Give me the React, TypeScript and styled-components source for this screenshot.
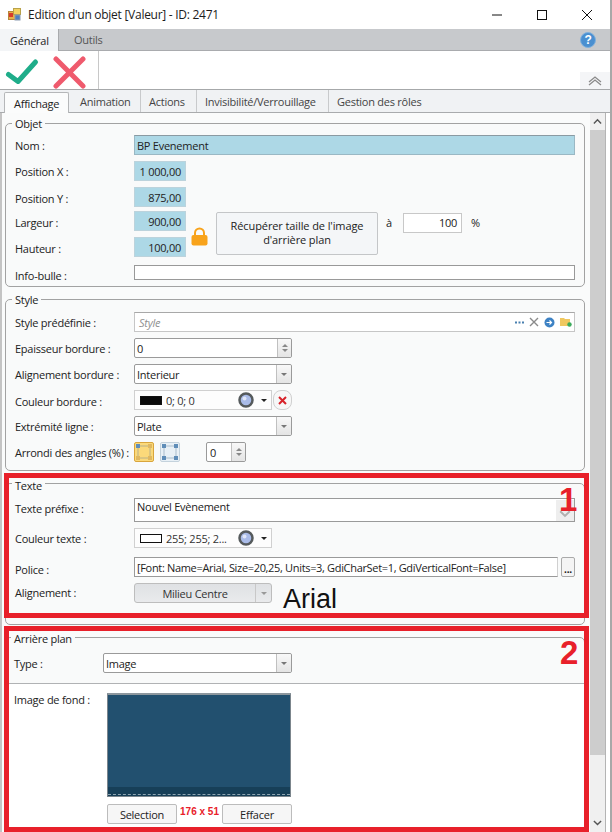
import React from "react";
import styled, { createGlobalStyle } from "styled-components";

const Global = createGlobalStyle`
  html, body { margin: 0; padding: 0; background: #fff; }
  * { box-sizing: border-box; }
  body { font-family: "Open Sans", "Noto Sans", sans-serif; font-size: 11px; letter-spacing: -0.25px; color: #222; }
`;

const Win = styled.div`
  position: relative; width: 612px; height: 832px; overflow: hidden; background: #fff;
  display: flex; flex-direction: column; border-right: 2px solid #a8a8a8;
`;
const TitleBar = styled.div`
  height: 29px; display: flex; align-items: center; padding-left: 8px; gap: 7px; flex: none; width: 610px;
`;
const TitleText = styled.span`font-size: 12px; letter-spacing: -0.27px; color: #1b1b1b;`;
const WinControls = styled.div`margin-left: auto; display: flex; margin-right: 18px; gap: 35px; align-items: center;`;
const RibbonTabs = styled.div`
  height: 22px; flex: none; background: #c7c9cc; border-bottom: 1px solid #a9abae; display: flex; align-items: stretch; position: relative;
`;
const RibbonTab = styled.div<{ $on?: boolean }>`
  width: ${p => (p.$on ? 59 : 50)}px; padding-left: ${p => (p.$on ? 10 : 15)}px; display: flex; align-items: center;
  color: ${p => (p.$on ? "#222" : "#555")}; background: ${p => (p.$on ? "#f3f5f7" : "transparent")};
  ${p => (p.$on ? "border-right: 1px solid #a9abae; margin-bottom: -1px;" : "")}
`;
const HelpWrap = styled.div`margin-left: auto; margin-right: 14px; display: flex; align-items: center;`;
const Toolbar = styled.div`
  height: 39px; flex: none; display: flex; background: #fff; border-bottom: 1px solid #a6a8aa; position: relative;
`;
const ActionGroup = styled.div`width: 99px; border-right: 1px solid #c8c8c8; display: block;`;
const Collapse = styled.div`
  margin-left: auto; margin-top: 21px; width: 30px; margin-right: 0; height: 17px; background: #f4f5f7;
  display: flex; align-items: center; justify-content: center;
`;
const Tabs = styled.div`
  height: 23px; flex: none; display: flex; align-items: flex-end; padding-left: 4px; background: #f0f2f4;
  border-bottom: 1px solid #a9abad;
`;
const Tab = styled.div<{ $on?: boolean; $w: number; $pl?: number; $last?: boolean }>`
  width: ${p => p.$w}px; height: ${p => (p.$on ? 21 : 22)}px; display: flex; align-items: center;
  color: ${p => (p.$on ? "#222" : "#444")}; white-space: nowrap;
  ${p => p.$on
    ? "padding-left: 9px; background: #fbfcfc; border: 1px solid #b5b7b9; border-bottom: none; border-radius: 2px 2px 0 0; margin-bottom: -1px;"
    : `padding-left: ${p.$pl ?? 8}px; border-right: ${p.$last ? "none" : "1px solid #c8cacc"};`}
`;
const Body = styled.div`flex: 1; display: flex; min-height: 0; border-left: 2px solid #c4c4c4;`;
const Panel = styled.div`
  width: 588px; padding: 3px 3px 0 3px; background: #fafbfb; display: flex; flex-direction: column; gap: 5px; flex: none; overflow: hidden;
`;
const Group = styled.fieldset<{ $pb: number }>`
  margin: 0; min-width: 0; width: 580px; flex: none; padding: 0 9px ${p => p.$pb}px 9px;
  border: 1px solid #a2a2a2; border-radius: 5px; background: #f9fafa;
`;
const Legend = styled.legend<{ $nudge?: number; $dy?: number }>`
  padding: 0 3px; margin-left: ${p => -3 - (p.$nudge ?? 0)}px; font-size: 11px; line-height: 14px; height: 14px; color: #222;
  position: relative; top: ${p => p.$dy ?? 1}px;
`;
const Row = styled.div<{ $top: number; $h?: number }>`
  display: flex; align-items: center; margin-top: ${p => p.$top}px; height: ${p => p.$h ?? 20}px;
`;
const Label = styled.div<{ $w?: number; $drop?: number; $lift?: number; $nudge?: number }>`
  width: ${p => (p.$w ?? 119) + (p.$nudge ?? 0)}px; flex: none; color: #222; white-space: nowrap;
  padding-top: ${p => p.$drop ?? 0}px; padding-bottom: ${p => p.$lift ?? 0}px; margin-left: ${p => -(p.$nudge ?? 0)}px;
`;
const BlueInput = styled.div<{ $w?: number }>`
  width: ${p => (p.$w ? `${p.$w}px` : "441px")}; height: 20px; background: #add8e6; border: 1px solid #9ab8c4;
  border-top-color: #8b9aa2; display: flex; align-items: center; padding: 0 2px;
  color: #222; white-space: nowrap;
`;
const NumInput = styled(BlueInput)`justify-content: flex-end; padding-right: 4px; border: 1px solid #bcd3dc;`;
const PlainBox = styled.div<{ $w: number; $h?: number }>`
  width: ${p => p.$w}px; height: ${p => p.$h ?? 20}px; background: #fff; border: 1px solid #9a9a9a;
  display: flex; align-items: center; padding-left: 2px; color: #222; flex: none; position: relative; white-space: nowrap;
`;
const ArrowBox = styled.div<{ $w?: number }>`
  margin-left: auto; width: ${p => p.$w ?? 14}px; height: 100%; background: linear-gradient(#f8f8f8, #e4e4e4);
  border-left: 1px solid #c0c0c0; display: flex; flex-direction: column; align-items: center; justify-content: center; gap: 2px;
  border-radius: 0 2px 2px 0;
`;
const Tri = styled.span<{ $up?: boolean; $c?: string; $s?: number }>`
  width: 0; height: 0; border-left: ${p => p.$s ?? 3}px solid transparent; border-right: ${p => p.$s ?? 3}px solid transparent;
  ${p => (p.$up ? "border-bottom" : "border-top")}: ${p => p.$s ?? 3}px solid ${p => p.$c ?? "#777"};
`;
const Combo = styled(PlainBox)`border-radius: 2px;`;
const SizeBlock = styled.div`display: flex; margin-top: 4px; align-items: center;`;
const SizeRows = styled.div`width: 172px; display: flex; flex-direction: column; flex: none;`;
const LockWrap = styled.div`width: 29px; flex: none; display: flex; padding-left: 4px; padding-top: 4px;`;
const BigBtn = styled.button`
  width: 162px; height: 43px; padding: 0 8px; font: inherit; letter-spacing: -0.1px; color: #222; line-height: 14px; background: #f4f6f8;
  border: 1px solid #c4c6c8; border-radius: 2px; flex: none; margin-top: -2px;
`;
const AWord = styled.span`margin-left: 8px; width: 17px; margin-top: -24px;`;
const Pct = styled.div`
  width: 59px; height: 20px; background: #fff; border: 1px solid #c8c8c8; text-align: right; padding-right: 4px; line-height: 18px;
  margin-top: -23px; flex: none;
`;
const PctSign = styled.span`margin-left: 9px; margin-top: -24px;`;
const InfoInput = styled.div`width: 441px; height: 15px; background: #fff; border: 1px solid #999;`;
const StyleBox = styled.div`
  width: 441px; height: 20px; background: #fff; border: 1px solid #c6c6c6; border-top-color: #a8a8a8; display: flex; align-items: center;
  padding-left: 4px; padding-right: 2px; color: #909090; font-style: italic;
`;
const StyleIcons = styled.div`margin-left: auto; display: flex; align-items: center; gap: 5px; font-style: normal;`;
const ColorBox = styled.div<{ $w: number }>`
  width: ${p => p.$w}px; height: 20px; background: #fdfdfd; border: 1px solid #d0d0d0; display: flex; align-items: center; padding-left: 5px; color: #333; flex: none;
`;
const Swatch = styled.span<{ $c: string }>`
  width: 22px; height: 9px; background: ${p => p.$c}; border: 1px solid #111; flex: none; margin-right: 4px;
`;
const WheelWrap = styled.div`margin-left: auto; display: flex; align-items: center; gap: 7px; margin-right: 4px;`;
const DelBtn = styled.div`
  width: 19px; height: 20px; margin-left: 1px; background: #f7f7f7; border: 1px solid #d0d0d0; border-radius: 8px;
  display: flex; align-items: center; justify-content: center;
`;
const CornerBtn = styled.div<{ $on?: boolean }>`
  width: 20px; height: 20px; border-radius: 2px; flex: none; margin-right: 6px; display: flex;
  background: ${p => (p.$on ? "#fbd97a" : "#e8f0f6")}; border: 1px solid ${p => (p.$on ? "#d9a53c" : "#c4d2dc")};
`;
const SpinSmall = styled(PlainBox)`margin-left: 20px; border-radius: 2px; padding-left: 3px;`;
const PrefixBox = styled.div`
  width: 441px; height: 24px; background: #fff; border: 1px solid #9a9a9a; display: flex; padding-left: 2px; color: #222; line-height: 14px; padding-top: 1px;
`;
const PrefixArrow = styled.div`
  margin-left: auto; width: 18px; height: 100%; background: #eeeeee; display: flex; justify-content: center; align-items: flex-end; padding-bottom: 3px;
`;
const FontBox = styled.div`
  width: 424px; height: 20px; background: #fff; border: 1px solid #9a9a9a; border-right-color: #d0d0d0; display: flex; align-items: center; padding-left: 2px; white-space: nowrap; flex: none; letter-spacing: -0.33px;
`;
const DotsBtn = styled.div`
  width: 14px; height: 20px; margin-left: 3px; background: #f4f4f4; border: 1px solid #aaa; border-radius: 2px; color: #111;
  display: flex; align-items: flex-end; justify-content: center; font-weight: 700; font-size: 10px; line-height: 14px;
`;
const AlignBtn = styled.div`
  width: 138px; height: 20px; border: 1px solid #bdbdbd; border-radius: 3px; display: flex; background: linear-gradient(#dfe1e4, #e9eaec);
`;
const AlignText = styled.div`flex: 1; display: flex; align-items: center; justify-content: center; color: #333;`;
const AlignArrow = styled.div`width: 16px; border-left: 1px solid #c8c8c8; display: flex; align-items: center; justify-content: center;`;
const Divider = styled.div`height: 1px; background: #b0b2b4; margin: 10px -9px 0;`;
const White = styled.div`
  margin: 0 -9px; padding: 9px 9px 0 9px; background: #fff; display: flex; height: 160px;
`;
const ImageLabel = styled.div`width: 93px; margin-left: -1px; flex: none; line-height: 14px; margin-top: 0;`;
const ImageCol = styled.div`display: flex; flex-direction: column; width: 185px;`;
const Picture = styled.div`
  position: relative; width: 184px; height: 104px; border: 1px solid #7b858c; border-top: 2px solid #8d979e;
  background: linear-gradient(#22506f 0 91%, #173f58 91%);
  &::after {
    content: ""; position: absolute; left: 0; right: 0; bottom: 1px; border-bottom: 1px dashed #8fa5b1;
  }
`;
const PicButtons = styled.div`display: flex; align-items: center; margin-top: 7px;`;
const PicBtn = styled.button`
  width: 70px; height: 20px; padding: 0; font: inherit; letter-spacing: inherit; color: #222; background: #f6f6f6; border: 1px solid #bcbcbc; border-radius: 2px; flex: none;
`;
const Dim = styled.span`
  width: 45px; flex: none; text-align: center; color: #e8202a; font-weight: 700; font-family: "Liberation Sans", sans-serif; font-size: 10px; letter-spacing: 0; margin-top: -5px; white-space: nowrap;
`;
const Scroll = styled.div`
  width: 15px; margin-left: 0; background: #f0f0f0; display: flex; flex-direction: column; align-items: center; flex: none;
`;
const ScrollBtn = styled.div`height: 17px; flex: none; display: flex; align-items: center; justify-content: center; width: 100%;`;
const Thumb = styled.div`height: 625px; width: 100%; background: #cdcdcd; flex: none;`;
const ScrollGap = styled.div`flex: 1;`;
const RightGap = styled.div`flex: 1; border-left: 1px solid #b4b4b4; background: #fff;`;
const RedBox = styled.div<{ $y: number; $h: number }>`
  position: absolute; left: 4px; top: ${p => p.$y}px; width: 585px; height: ${p => p.$h}px; border: 5px solid #e8202a; pointer-events: none;
`;
const RedNum = styled.div<{ $y: number; $x: number }>`
  position: absolute; left: ${p => p.$x}px; top: ${p => p.$y}px; color: #e8202a; font-family: "Liberation Sans", sans-serif; font-weight: 700; font-size: 33px; line-height: 33px; letter-spacing: 0;
`;
const ArialNote = styled.div`
  position: absolute; left: 283px; top: 583px; color: #111; font-family: "Liberation Sans", sans-serif; font-size: 27px; line-height: 32px; letter-spacing: 0;
`;

const AppIcon = () => (
  <svg width="13" height="13" viewBox="0 0 13 13">
    <rect x="0.5" y="3.5" width="7" height="8" fill="#e8b04a" stroke="#b8843a" />
    <rect x="1" y="5" width="4" height="4" fill="#d83a2a" />
    <rect x="5.5" y="0.5" width="7" height="6" fill="#f3d060" stroke="#b8a24a" />
    <rect x="7" y="7" width="5" height="5" fill="#4f7fc0" stroke="#8a9ab0" />
  </svg>
);
const Minimize = () => <svg width="10" height="10" viewBox="0 0 10 10"><path d="M0 5h10" stroke="#111" strokeWidth="1" /></svg>;
const Maximize = () => <svg width="10" height="10" viewBox="0 0 10 10"><rect x=".5" y=".5" width="9" height="9" fill="none" stroke="#111" /></svg>;
const Close = () => <svg width="10" height="10" viewBox="0 0 10 10"><path d="M0 0l10 10M10 0L0 10" stroke="#111" strokeWidth="1" /></svg>;
const Help = () => (
  <svg width="16" height="16" viewBox="0 0 16 16">
    <circle cx="8" cy="8" r="7.5" fill="#4a8fd0" stroke="#7fb0dc" />
    <text x="8" y="12.3" textAnchor="middle" fontSize="12" fontWeight="700" fontFamily="Liberation Sans" fill="#fff">?</text>
  </svg>
);
const Actions = () => (
  <svg width="98" height="38" viewBox="0 0 98 38">
    <path d="M8.5 23.5l9.5 7L35.5 11" fill="none" stroke="#1fad8a" strokeWidth="5" strokeLinecap="round" strokeLinejoin="round" />
    <path d="M56 8l27 27M83 8L56 35" fill="none" stroke="#ef5a6d" strokeWidth="5" strokeLinecap="round" />
  </svg>
);
const Chev = ({ up = false, c = "#666", w = 12 }: { up?: boolean; c?: string; w?: number }) => (
  <svg width={w} height={w * 0.7} viewBox="0 0 10 7">
    <path d={up ? "M1 6l4-4 4 4" : "M1 1l4 4 4-4"} fill="none" stroke={c} strokeWidth="1.6" />
  </svg>
);
const DoubleUp = () => (
  <svg width="14" height="10" viewBox="0 0 14 10">
    <path d="M1 6l6-5 6 5M1 9l6-5 6 5" fill="none" stroke="#8a8a8a" strokeWidth="1.3" />
  </svg>
);
const Lock = () => (
  <svg width="17" height="19" viewBox="0 0 17 19">
    <path d="M4 9V6a4.5 4.5 0 0 1 9 0v3" fill="none" stroke="#f8a31b" strokeWidth="2" />
    <rect x="0.5" y="8" width="16" height="10.5" rx="2" fill="#f8a31b" />
  </svg>
);
const StyleActions = () => (
  <StyleIcons>
    <svg width="9" height="3" viewBox="0 0 9 3"><path d="M0 1.5h2M3.5 1.5h2M7 1.5h2" stroke="#4a80b0" strokeWidth="2" /></svg>
    <svg width="10" height="10" viewBox="0 0 10 10"><path d="M1 1l8 8M9 1l-8 8" stroke="#8a8a8a" strokeWidth="1.4" /></svg>
    <svg width="11" height="11" viewBox="0 0 11 11"><circle cx="5.5" cy="5.5" r="5" fill="#3d82c4" /><path d="M2.5 5.5h5M5.5 3.5l2 2-2 2" fill="none" stroke="#fff" strokeWidth="1.2" /></svg>
    <svg width="12" height="10" viewBox="0 0 12 10"><path d="M0 1h4l1 1h5v7H0z" fill="#f0c860" /><circle cx="9.5" cy="7.5" r="2.2" fill="#3cab5c" /></svg>
  </StyleIcons>
);
const Wheel = () => (
  <svg width="16" height="16" viewBox="0 0 16 16">
    <circle cx="8" cy="8" r="6.5" fill="#a9bbe8" stroke="#555a5c" strokeWidth="2.5" />
    <circle cx="6.5" cy="6.5" r="2" fill="#dfe6f8" />
  </svg>
);
const RedX = () => (
  <svg width="9" height="9" viewBox="0 0 9 9"><path d="M1 1l7 7M8 1L1 8" stroke="#d8232a" strokeWidth="2" /></svg>
);
const CornerIcon = ({ on }: { on?: boolean }) => (
  <svg width="18" height="18" viewBox="0 0 18 18">
    <rect x="3" y="3" width="12" height="12" fill="none" stroke={on ? "#b8b088" : "#a9bccb"} strokeWidth="1" />
    {[[1, 1], [13, 1], [1, 13], [13, 13]].map(([x, y]) => (
      <rect key={`${x}-${y}`} x={x} y={y} width="4" height="4" fill={on && x + y > 2 ? "#e0b860" : "#5f8db8"} />
    ))}
  </svg>
);

const Select = ({ w, value }: { w: number; value: string }) => (
  <Combo $w={w}>{value}<ArrowBox $w={15}><Tri $c="#777" /></ArrowBox></Combo>
);
const Spin = ({ value }: { value: string }) => (
  <Combo $w={158}>{value}<ArrowBox $w={14}><Tri $up $c="#888" /><Tri $c="#888" /></ArrowBox></Combo>
);

export default function App() {
  return (
    <>
      <Global />
      <Win>
        <TitleBar>
          <AppIcon />
          <TitleText>Edition d'un objet [Valeur] - ID: 2471</TitleText>
          <WinControls><Minimize /><Maximize /><Close /></WinControls>
        </TitleBar>
        <RibbonTabs>
          <RibbonTab $on>Général</RibbonTab>
          <RibbonTab>Outils</RibbonTab>
          <HelpWrap><Help /></HelpWrap>
        </RibbonTabs>
        <Toolbar>
          <ActionGroup><Actions /></ActionGroup>
          <Collapse><DoubleUp /></Collapse>
        </Toolbar>
        <Tabs>
          <Tab $on $w={65}>Affichage</Tab>
          <Tab $w={72} $pl={11}>Animation</Tab>
          <Tab $w={56}>Actions</Tab>
          <Tab $w={132}>Invisibilité/Verrouillage</Tab>
          <Tab $w={110} $last>Gestion des rôles</Tab>
        </Tabs>
        <Body>
          <Panel>
            <Group $pb={6}>
              <Legend>Objet</Legend>
              <Row $top={5}><Label $drop={1}>Nom :</Label><BlueInput>BP Evenement</BlueInput></Row>
              <Row $top={6}><Label>Position X :</Label><NumInput $w={52}>1 000,00</NumInput></Row>
              <Row $top={6}><Label $drop={2}>Position Y :</Label><NumInput $w={52}>875,00</NumInput></Row>
              <SizeBlock>
                <SizeRows>
                  <Row $top={0}><Label $drop={2}>Largeur :</Label><NumInput $w={52}>900,00</NumInput></Row>
                  <Row $top={6}><Label $drop={2}>Hauteur :</Label><NumInput $w={52}>100,00</NumInput></Row>
                </SizeRows>
                <LockWrap><Lock /></LockWrap>
                <BigBtn>Récupérer taille de l'image d'arrière plan</BigBtn>
                <AWord>à</AWord>
                <Pct>100</Pct>
                <PctSign>%</PctSign>
              </SizeBlock>
              <Row $top={8} $h={15}><Label $drop={6}>Info-bulle :</Label><InfoInput /></Row>
            </Group>

            <Group $pb={8}>
              <Legend>Style</Legend>
              <Row $top={6}><Label>Style prédéfinie :</Label><StyleBox>Style<StyleActions /></StyleBox></Row>
              <Row $top={6}><Label>Epaisseur bordure :</Label><Spin value="0" /></Row>
              <Row $top={6}><Label>Alignement bordure :</Label><Select w={158} value="Interieur" /></Row>
              <Row $top={6}>
                <Label $drop={3}>Couleur bordure :</Label>
                <ColorBox $w={138}><Swatch $c="#0a0a0a" />0; 0; 0<WheelWrap><Wheel /><Tri $c="#222" /></WheelWrap></ColorBox>
                <DelBtn><RedX /></DelBtn>
              </Row>
              <Row $top={6}><Label>Extrémité ligne :</Label><Select w={158} value="Plate" /></Row>
              <Row $top={6}>
                <Label $drop={1}>Arrondi des angles (%) :</Label>
                <CornerBtn $on><CornerIcon on /></CornerBtn>
                <CornerBtn><CornerIcon /></CornerBtn>
                <SpinSmall $w={40}>0<ArrowBox $w={14}><Tri $up $c="#888" /><Tri $c="#888" /></ArrowBox></SpinSmall>
              </Row>
            </Group>

            <Group $pb={21}>
              <Legend $dy={3}>Texte</Legend>
              <Row $top={8} $h={24}><Label $lift={4}>Texte préfixe :</Label><PrefixBox>Nouvel Evènement<PrefixArrow><Chev c="#b0b0b0" /></PrefixArrow></PrefixBox></Row>
              <Row $top={6}>
                <Label>Couleur texte :</Label>
                <ColorBox $w={138}><Swatch $c="#ffffff" />255; 255; 2...<WheelWrap><Wheel /><Tri $c="#222" /></WheelWrap></ColorBox>
              </Row>
              <Row $top={9}>
                <Label $drop={4}>Police :</Label>
                <FontBox>[Font: Name=Arial, Size=20,25, Units=3, GdiCharSet=1, GdiVerticalFont=False]</FontBox>
                <DotsBtn>...</DotsBtn>
              </Row>
              <Row $top={6}>
                <Label $lift={2}>Alignement :</Label>
                <AlignBtn><AlignText>Milieu Centre</AlignText><AlignArrow><Tri $c="#999" /></AlignArrow></AlignBtn>
              </Row>
            </Group>

            <Group $pb={0}>
              <Legend $nudge={1} $dy={2}>Arrière plan</Legend>
              <Row $top={9}><Label $w={88} $nudge={1}>Type :</Label><Select w={189} value="Image" /></Row>
              <Divider />
              <White>
                <ImageLabel>Image de fond :</ImageLabel>
                <ImageCol>
                  <Picture />
                  <PicButtons>
                    <PicBtn>Selection</PicBtn>
                    <Dim>176 x 51</Dim>
                    <PicBtn>Effacer</PicBtn>
                  </PicButtons>
                </ImageCol>
              </White>
            </Group>
          </Panel>
          <Scroll>
            <ScrollBtn><Chev up c="#555" w={9} /></ScrollBtn>
            <Thumb />
            <ScrollGap />
            <ScrollBtn><Chev c="#555" w={9} /></ScrollBtn>
          </Scroll>
          <RightGap />
        </Body>
        <RedBox $y={473} $h={145} />
        <RedBox $y={626} $h={206} />
        <RedNum $x={559} $y={483}>1</RedNum>
        <RedNum $x={560} $y={636}>2</RedNum>
        <ArialNote>Arial</ArialNote>
      </Win>
    </>
  );
}
